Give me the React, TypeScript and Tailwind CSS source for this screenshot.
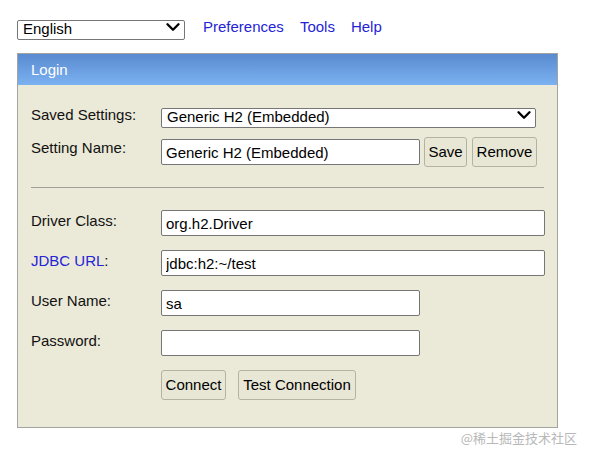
import { ChevronDown } from "lucide-react";

const font = { fontFamily: '"Liberation Sans", Arial, sans-serif' };

function Select({ value, width }: { value: string; width: string }) {
  return (
    <div className={`relative ${width} h-[20px]`}>
      <select
        defaultValue={value}
        className="appearance-none w-full h-full bg-white border border-[#767676] rounded-[2px] pl-[5px] pb-[2px] text-[15px] leading-[16px] text-black outline-none"
      >
        <option>{value}</option>
      </select>
      <ChevronDown
        size={22}
        strokeWidth={2.6}
        className="absolute right-[1px] top-[-1px] pointer-events-none text-black"
      />
    </div>
  );
}

function Field({ value, width }: { value: string; width: string }) {
  return (
    <input
      defaultValue={value}
      className={`${width} h-[26px] bg-white border border-[#767676] rounded-[2px] px-[4px] text-[15px] text-black outline-none`}
    />
  );
}

function Btn({ label, width }: { label: string; width: string }) {
  return (
    <button className={`${width} h-[30px] bg-[#e8e6d5] border border-[#b4b2a3] rounded-[3px] text-[15px] text-black`}>
      {label}
    </button>
  );
}

function Row({ label, children }: { label: React.ReactNode; children: React.ReactNode }) {
  return (
    <div className="flex items-start h-[26px]">
      <div className="w-[130px] pt-[1px] text-[15px] leading-[20px] text-[#111]">{label}</div>
      {children}
    </div>
  );
}

export default function App() {
  return (
    <div className="w-[589px] h-[457px] bg-white px-[17px] pt-[17px]" style={font}>
      {/* Top bar */}
      <div className="flex items-center h-[20px]">
        <Select value="English" width="w-[168px]" />
        <div className="flex items-center text-[15px] text-[#2424d6] ml-[18px] gap-[16px]">
          <a>Preferences</a>
          <a>Tools</a>
          <a>Help</a>
        </div>
      </div>

      {/* Login panel */}
      <div className="mt-[16px] w-[541px] border border-[#a3a3a0] bg-[#ebe9d8]">
        <div className="h-[31px] bg-gradient-to-b from-[#5a8ad0] to-[#7bb2f1] flex items-center pl-[13px] pt-[1px] text-[15px] text-white">
          Login
        </div>
        <div className="pl-[13px] pt-[20px] pb-[27px]">
          <div className="flex items-center h-[20px]">
            <div className="w-[130px] text-[15px] text-[#111]">Saved Settings:</div>
            <Select value="Generic H2 (Embedded)" width="w-[375px]" />
          </div>

          <div className="flex items-start h-[30px] mt-[12px]">
            <div className="w-[130px] pt-[1px] text-[15px] leading-[20px] text-[#111]">Setting Name:</div>
            <div className="pt-[2px]">
              <Field value="Generic H2 (Embedded)" width="w-[259px]" />
            </div>
            <div className="ml-[4px]">
              <Btn label="Save" width="w-[43px]" />
            </div>
            <div className="ml-[5px]">
              <Btn label="Remove" width="w-[65px]" />
            </div>
          </div>

          <div className="mt-[20px] w-[513px] h-px bg-[#a09f98]" />

          <div className="mt-[22px] flex flex-col gap-[14px]">
            <Row label="Driver Class:">
              <Field value="org.h2.Driver" width="w-[384px]" />
            </Row>
            <Row
              label={
                <>
                  <span className="text-[#2424d6]">JDBC URL</span>:
                </>
              }
            >
              <Field value="jdbc:h2:~/test" width="w-[384px]" />
            </Row>
            <Row label="User Name:">
              <Field value="sa" width="w-[259px]" />
            </Row>
            <Row label="Password:">
              <input
                type="password"
                className="w-[259px] h-[26px] bg-white border border-[#767676] rounded-[2px] px-[4px] outline-none"
              />
            </Row>
          </div>

          <div className="flex mt-[14px] pl-[130px] gap-[12px]">
            <Btn label="Connect" width="w-[65px]" />
            <Btn label="Test Connection" width="w-[118px]" />
          </div>
        </div>
      </div>

      <div
        className="flex justify-end mr-[-5px] mt-[1px] text-[13px] text-[#b8b8b8] leading-[18px]"
        style={{ fontFamily: '"Noto Sans CJK SC", "Liberation Sans", sans-serif' }}
      >
        @稀土掘金技术社区
      </div>
    </div>
  );
}
